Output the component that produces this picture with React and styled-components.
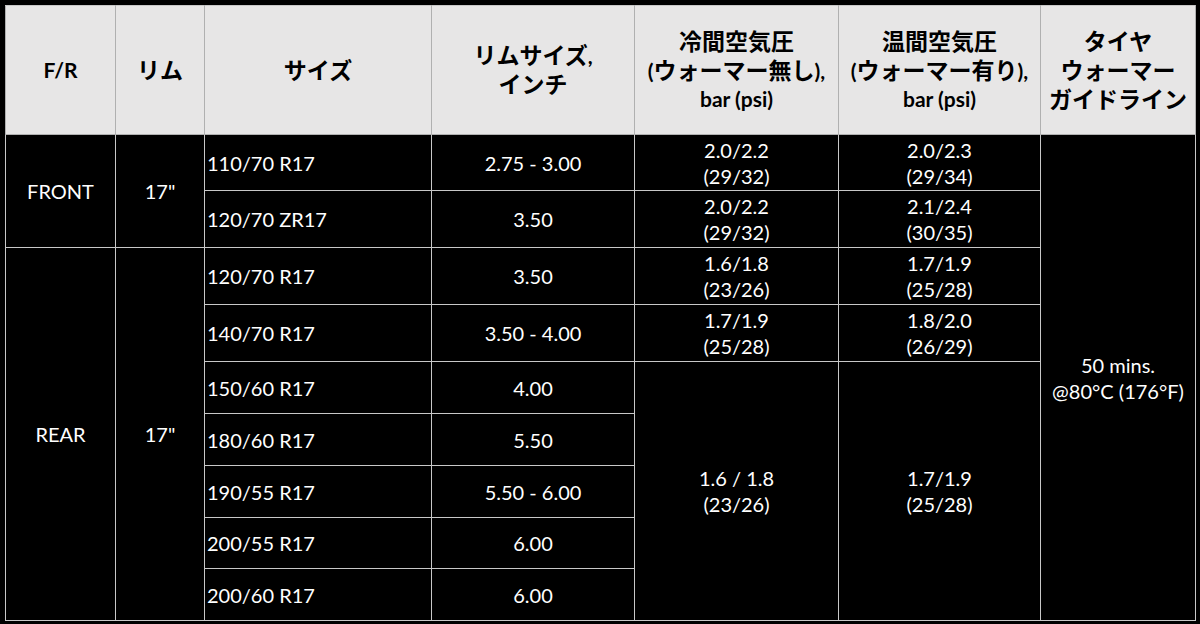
import React from 'react';
import styled, { createGlobalStyle } from 'styled-components';

const GlobalStyle = createGlobalStyle`
  html, body {
    margin: 0;
    padding: 0;
    background: #000;
  }
  body {
    font-family: "Lato", "Noto Sans CJK JP", sans-serif;
  }
`;

const Page = styled.div`
  width: 1200px;
  height: 624px;
  padding: 5px;
  box-sizing: border-box;
  background: #000;
`;

const Table = styled.table`
  border-collapse: collapse;
  table-layout: fixed;
  width: 1190px;
  border: 1px solid #c8c8c8;
`;

const HeadCell = styled.th`
  height: 128px;
  padding: 0 2px;
  background: #e7e6e6;
  color: #000;
  font-weight: 700;
  font-size: 21px;
  line-height: 28px;
  text-align: center;
  vertical-align: middle;
  border: 1px solid #b0b0b0;
  border-top-color: #c8c8c8;
  white-space: nowrap;
`;

const Jp = styled.span`
  font-size: 23px;
`;

const Cell = styled.td`
  height: ${p => p.$h}px;
  padding: 0 ${p => (p.$left ? '2px' : '4px')};
  background: #000;
  color: #fff;
  font-size: 20px;
  line-height: 26px;
  text-align: ${p => (p.$left ? 'left' : 'center')};
  vertical-align: middle;
  border: 1px solid #c8c8c8;
  box-sizing: border-box;
  white-space: nowrap;
`;

const Line = styled.span`
  display: block;
`;

const widths = [110, 89, 227, 203, 204, 202, 155];
const heights = [56, 57, 57, 57, 52, 52, 52, 51, 52];

const headers = [
  [['F/R']],
  [[null, 'リム']],
  [[null, 'サイズ']],
  [[null, 'リムサイズ', ','], [null, 'インチ']],
  [[null, '冷間空気圧'], ['(', 'ウォーマー無し', '),'], ['bar (psi)']],
  [[null, '温間空気圧'], ['(', 'ウォーマー有り', '),'], ['bar (psi)']],
  [[null, 'タイヤ'], [null, 'ウォーマー'], [null, 'ガイドライン']]
];

const sizes = [
  ['110/70 R17', '2.75 - 3.00'],
  ['120/70 ZR17', '3.50'],
  ['120/70 R17', '3.50'],
  ['140/70 R17', '3.50 - 4.00'],
  ['150/60 R17', '4.00'],
  ['180/60 R17', '5.50'],
  ['190/55 R17', '5.50 - 6.00'],
  ['200/55 R17', '6.00'],
  ['200/60 R17', '6.00']
];

const pressures = [
  [['2.0/2.2', '(29/32)'], ['2.0/2.3', '(29/34)']],
  [['2.0/2.2', '(29/32)'], ['2.1/2.4', '(30/35)']],
  [['1.6/1.8', '(23/26)'], ['1.7/1.9', '(25/28)']],
  [['1.7/1.9', '(25/28)'], ['1.8/2.0', '(26/29)']]
];

const Lines = ({ items }) => items.map(t => <Line key={t}>{t}</Line>);

// header line: [latin before, japanese, latin after]
const HeadLine = ({ parts }) => (
  <Line>
    {parts[0]}
    {parts[1] && <Jp>{parts[1]}</Jp>}
    {parts[2]}
  </Line>
);

const App = () => {
  return (
    <Page>
      <GlobalStyle />
      <Table>
        <colgroup>
          {widths.map((w, i) => (
            <col key={i} style={{ width: w }} />
          ))}
        </colgroup>
        <thead>
          <tr>
            {headers.map((h, i) => (
              <HeadCell key={i}>
                {h.map((parts, j) => (
                  <HeadLine key={j} parts={parts} />
                ))}
              </HeadCell>
            ))}
          </tr>
        </thead>
        <tbody>
          {sizes.map(([size, rim], i) => (
            <tr key={size + i}>
              {i === 0 && (
                <>
                  <Cell $h={heights[0]} rowSpan={2}>FRONT</Cell>
                  <Cell $h={heights[0]} rowSpan={2}>17"</Cell>
                </>
              )}
              {i === 2 && (
                <>
                  <Cell $h={heights[2]} rowSpan={7}>REAR</Cell>
                  <Cell $h={heights[2]} rowSpan={7}>17"</Cell>
                </>
              )}
              <Cell $h={heights[i]} $left>{size}</Cell>
              <Cell $h={heights[i]}>{rim}</Cell>
              {i < 4 &&
                pressures[i].map((p, j) => (
                  <Cell key={j} $h={heights[i]}>
                    <Lines items={p} />
                  </Cell>
                ))}
              {i === 4 && (
                <>
                  <Cell $h={heights[4]} rowSpan={5}>
                    <Lines items={['1.6 / 1.8', '(23/26)']} />
                  </Cell>
                  <Cell $h={heights[4]} rowSpan={5}>
                    <Lines items={['1.7/1.9', '(25/28)']} />
                  </Cell>
                </>
              )}
              {i === 0 && (
                <Cell $h={heights[0]} rowSpan={9}>
                  <Lines items={['50 mins.', '@80°C (176°F)']} />
                </Cell>
              )}
            </tr>
          ))}
        </tbody>
      </Table>
    </Page>
  );
};

export default App;
